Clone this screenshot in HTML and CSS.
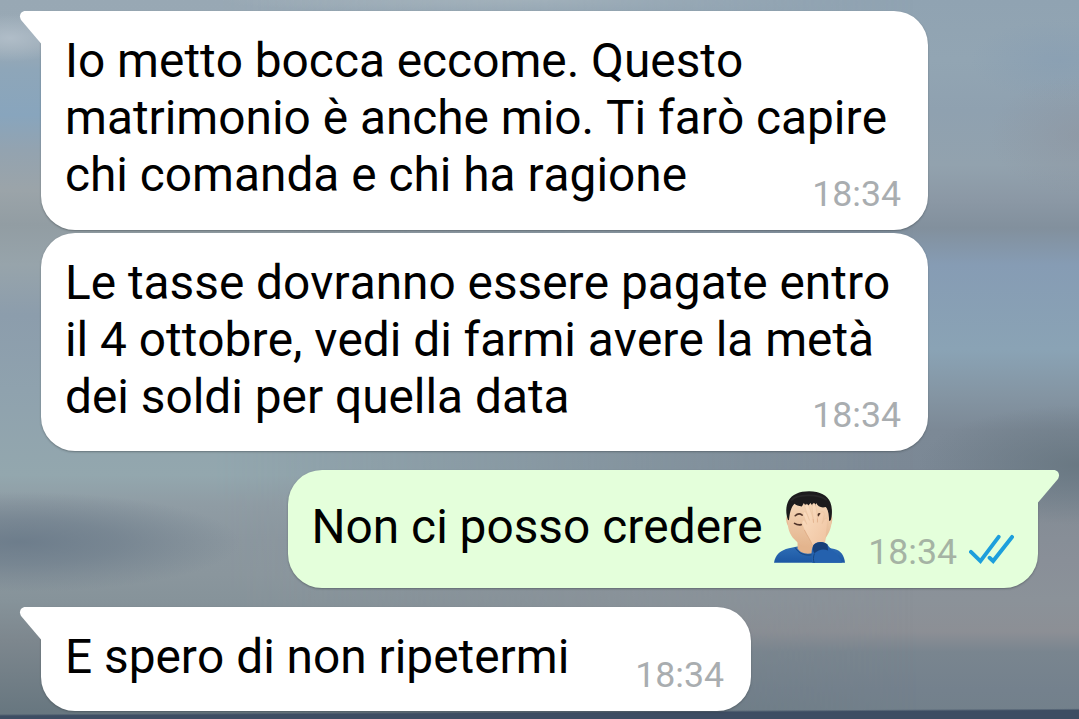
FILE: index.html
```html
<!DOCTYPE html>
<html lang="it">
<head>
    <meta charset="UTF-8">
    <meta name="viewport" content="width=device-width, initial-scale=1.0">
    <title>Chat</title>
    <link rel="stylesheet" href="styles.css">
</head>
<body>
<main class="chat">
    <div class="message received first wide">
        <svg class="tail" viewBox="0 0 23 33"><path d="M23 0H6.5C1.5 0-.7 5 2.5 9.5L22 32.5H23Z"/></svg>
        <p class="text">Io metto bocca eccome. Questo<br>matrimonio è anche mio. Ti farò capire<br>chi comanda e chi ha ragione</p>
        <div class="meta"><span class="time">18:34</span></div>
    </div>
    <div class="message received wide">
        <p class="text">Le tasse dovranno essere pagate entro<br>il 4 ottobre, vedi di farmi avere la metà<br>dei soldi per quella data</p>
        <div class="meta"><span class="time">18:34</span></div>
    </div>
    <div class="message sent first">
        <svg class="tail" viewBox="0 0 23 33"><path d="M23 0H6.5C1.5 0-.7 5 2.5 9.5L22 32.5H23Z"/></svg>
        <p class="text">Non ci posso credere <svg class="emoji" viewBox="42 32 214 216">
            <defs>
                <linearGradient id="skin" x1="0" x2="0" y1="0" y2="1">
                    <stop offset="0" stop-color="#f6d8ba"/>
                    <stop offset="1" stop-color="#e3b48d"/>
                </linearGradient>
                <linearGradient id="hand" x1="0" x2="1" y1="0" y2="1">
                    <stop offset="0" stop-color="#fbdfc3"/>
                    <stop offset="1" stop-color="#efc3a0"/>
                </linearGradient>
                <linearGradient id="shirt" x1="0" x2="0" y1="0" y2="1">
                    <stop offset="0" stop-color="#2e6db5"/>
                    <stop offset="1" stop-color="#1c57a3"/>
                </linearGradient>
            </defs>
            <path d="M42 248C46 222 62 210 87 204L112 199H186L224 206C244 211 254 226 256 248Z" fill="url(#shirt)"/>
            <path d="M113 180V204C120 218 138 224 160 218V180Z" fill="#e3b48d"/>
            <path d="M106 202C116 222 142 230 164 221" fill="none" stroke="#174780" stroke-width="3"/>
            <path d="M84 104C76 106 78 134 88 140ZM213 104C221 106 218 134 209 140Z" fill="#e6b48d"/>
            <path d="M83 84C80 140 86 160 104 178C120 196 134 202 150 200C180 198 211 168 215 130V82L190 60H106Z" fill="url(#skin)"/>
            <path d="M84 118C77 100 77 76 86 60C96 42 118 32 148 32C180 32 204 44 212 66C218 82 218 104 213 120L208 122C208 106 206 88 198 80C184 84 174 78 169 68L166 79C159 78 155 74 152 68L145 76C139 77 135 74 132 68L126 78C116 77 108 74 104 70C92 82 89 100 87 120Z" fill="#1c1b1d"/>
            <path d="M94 60C110 42 174 38 201 59" fill="none" stroke="#3c3a3d" stroke-width="5" opacity=".4"/>
            <path d="M106 106Q116 96 127 104M104 129Q113 135 124 133" fill="none" stroke="#51352a" stroke-width="5" stroke-linecap="round"/>
            <circle cx="179" cy="104" r="6" fill="#43291f"/>
            <path d="M157 195C152 180 141 166 134 149C129 138 124 126 128 121C132 117 137 124 141 132L131 104C127 94 135 90 140 99L149 120L136 82C133 71 142 67 147 77L160 114L157 78C156 67 166 65 168 76L173 113L182 100C186 90 195 94 193 104L187 130L194 117C200 109 207 115 204 124C200 145 200 169 194 191Z" fill="url(#hand)" stroke="#e6bc98" stroke-width="1"/>
            <path d="M160 116L161 126M173 115L173 125M134 150C142 166 152 180 157 193" fill="none" stroke="#d9a27b" stroke-width="2" stroke-linecap="round"/>
            <path d="M157 248C154 225 154 202 163 192C174 183 192 182 203 193C212 210 236 218 247 248Z" fill="#2461ae"/>
            <path d="M161 194C172 183 193 182 203 193L205 211C191 204 176 208 164 219C158 211 158 200 161 194Z" fill="#173f78"/>
            <path d="M164 220C160 230 160 239 163 248" fill="none" stroke="#174780" stroke-width="3"/>
        </svg></p>
        <div class="meta">
            <span class="time">18:34</span>
            <svg class="ticks" viewBox="327 219 138 90"><path d="M333 273L362 301L418 227M390 291L401 301L459 227"/></svg>
        </div>
    </div>
    <div class="message received first short">
        <svg class="tail" viewBox="0 0 23 33"><path d="M23 0H6.5C1.5 0-.7 5 2.5 9.5L22 32.5H23Z"/></svg>
        <p class="text">E spero di non ripetermi</p>
        <div class="meta"><span class="time">18:34</span></div>
    </div>
</main>
</body>
</html>
```
FILE: styles.css
```css
* {
    box-sizing: border-box;
}
body {
    margin: 0;
    font-family: Roboto, "Liberation Sans", sans-serif;
    color: #000;
}
/* cloudy sky wallpaper, sea at the very bottom */
.chat {
    position: relative;
    z-index: 0;
    display: flex;
    flex-direction: column;
    align-items: flex-start;
    height: 719px;
    padding: 11px 41px 0;
    overflow: hidden;
    background:
        radial-gradient(ellipse 160px 60px at 1079px 465px, #65747ecc, transparent),
        radial-gradient(ellipse 90px 60px at 1079px 135px, #8c8f9966, transparent),
        radial-gradient(ellipse 90px 40px at 1060px 60px, #8099b366, transparent),
        linear-gradient(#90a3b2 0, #92a5b3 60px, #8fa1b0 110px, #92a2ae 165px, #8b98a5 200px, #82909d 228px, #869cb4 265px, #8aa3b5 350px, #8495a3 395px, #7c8996 430px, #7b8895 475px, #858d96 520px, #898f98 560px, #8b9299 600px, #8c8f95 632px, #79858f 652px, #74818d 690px, #72808a 719px);
}
.chat::before {
    content: "";
    position: absolute;
    z-index: -1;
    inset: 0;
    background:
        radial-gradient(ellipse 220px 50px at 20px 542px, #6b7b8aee, #6b7b8a99 45%, transparent),
        radial-gradient(ellipse 320px 14px at 540px 0, #afbbc1, transparent),
        radial-gradient(ellipse 60px 24px at 10px 38px, #b0bdc8, transparent),
        linear-gradient(#98a8b4 0, #99a9b5 45px, #8ea6b9 70px, #88a5bd 115px, #93a3b0 150px, #9ba4a9 190px, #929da3 225px, #97a4ab 265px, #8c9dac 315px, #8fa2ae 390px, #93a7ae 475px, #8f9ca4 505px, #8b979f 540px, #8a969d 575px, #86939a 600px, #7d878e 640px, #687780 711px);
    -webkit-mask-image: linear-gradient(to right, #000 20%, transparent 85%);
    mask-image: linear-gradient(to right, #000 20%, transparent 85%);
}
.chat::after {
    content: "";
    position: absolute;
    z-index: -1;
    inset: auto 0 0;
    height: 12px;
    background: linear-gradient(179.7deg, transparent 7px, #3d4d63 9px);
}
.message {
    position: relative;
    display: flex;
    flex-direction: column;
    padding: 22px 26.5px 16px 24px;
    border-radius: 34px;
    background-color: #fff;
    box-shadow: 0 1px 2px rgba(50, 60, 65, 0.45);
}
.received.first {
    border-top-left-radius: 0;
}
.wide {
    width: 886.5px;
    height: 218.5px;
    margin-bottom: 3.3px;
}
.short {
    width: 709.5px;
    height: 104px;
}
.sent {
    align-self: flex-end;
    width: 750.5px;
    height: 118.5px;
    margin-top: 15px;
    margin-bottom: 18.5px;
    padding-top: 21px;
    padding-right: 24px;
    border-top-right-radius: 0;
    background-color: #e4ffdb;
}
.tail {
    position: absolute;
    top: 0;
    left: -22px;
    width: 23px;
    height: 33px;
    fill: #fff;
}
.sent .tail {
    left: auto;
    right: -22px;
    transform: scaleX(-1);
    fill: #e4ffdb;
}
.text {
    margin: 0;
    font-size: 47.8px;
    font-kerning: none;
    line-height: 57px;
    white-space: nowrap;
}
.emoji {
    width: 71px;
    height: 72px;
    vertical-align: -20px;
}
.meta {
    display: flex;
    align-items: flex-end;
    align-self: flex-end;
    gap: 12px;
    margin-top: auto;
    height: 0;
}
.time {
    position: relative;
    top: 1px;
    font-size: 35.7px;
    line-height: 42px;
    color: #a9adb0;
}
.sent .time {
    color: #a5b3a4;
}
.ticks {
    width: 45px;
    height: 30px;
    margin-bottom: 8px;
    fill: none;
    stroke: #1d9fdc;
    stroke-width: 12;
    stroke-linecap: round;
    stroke-linejoin: miter;
}
```
